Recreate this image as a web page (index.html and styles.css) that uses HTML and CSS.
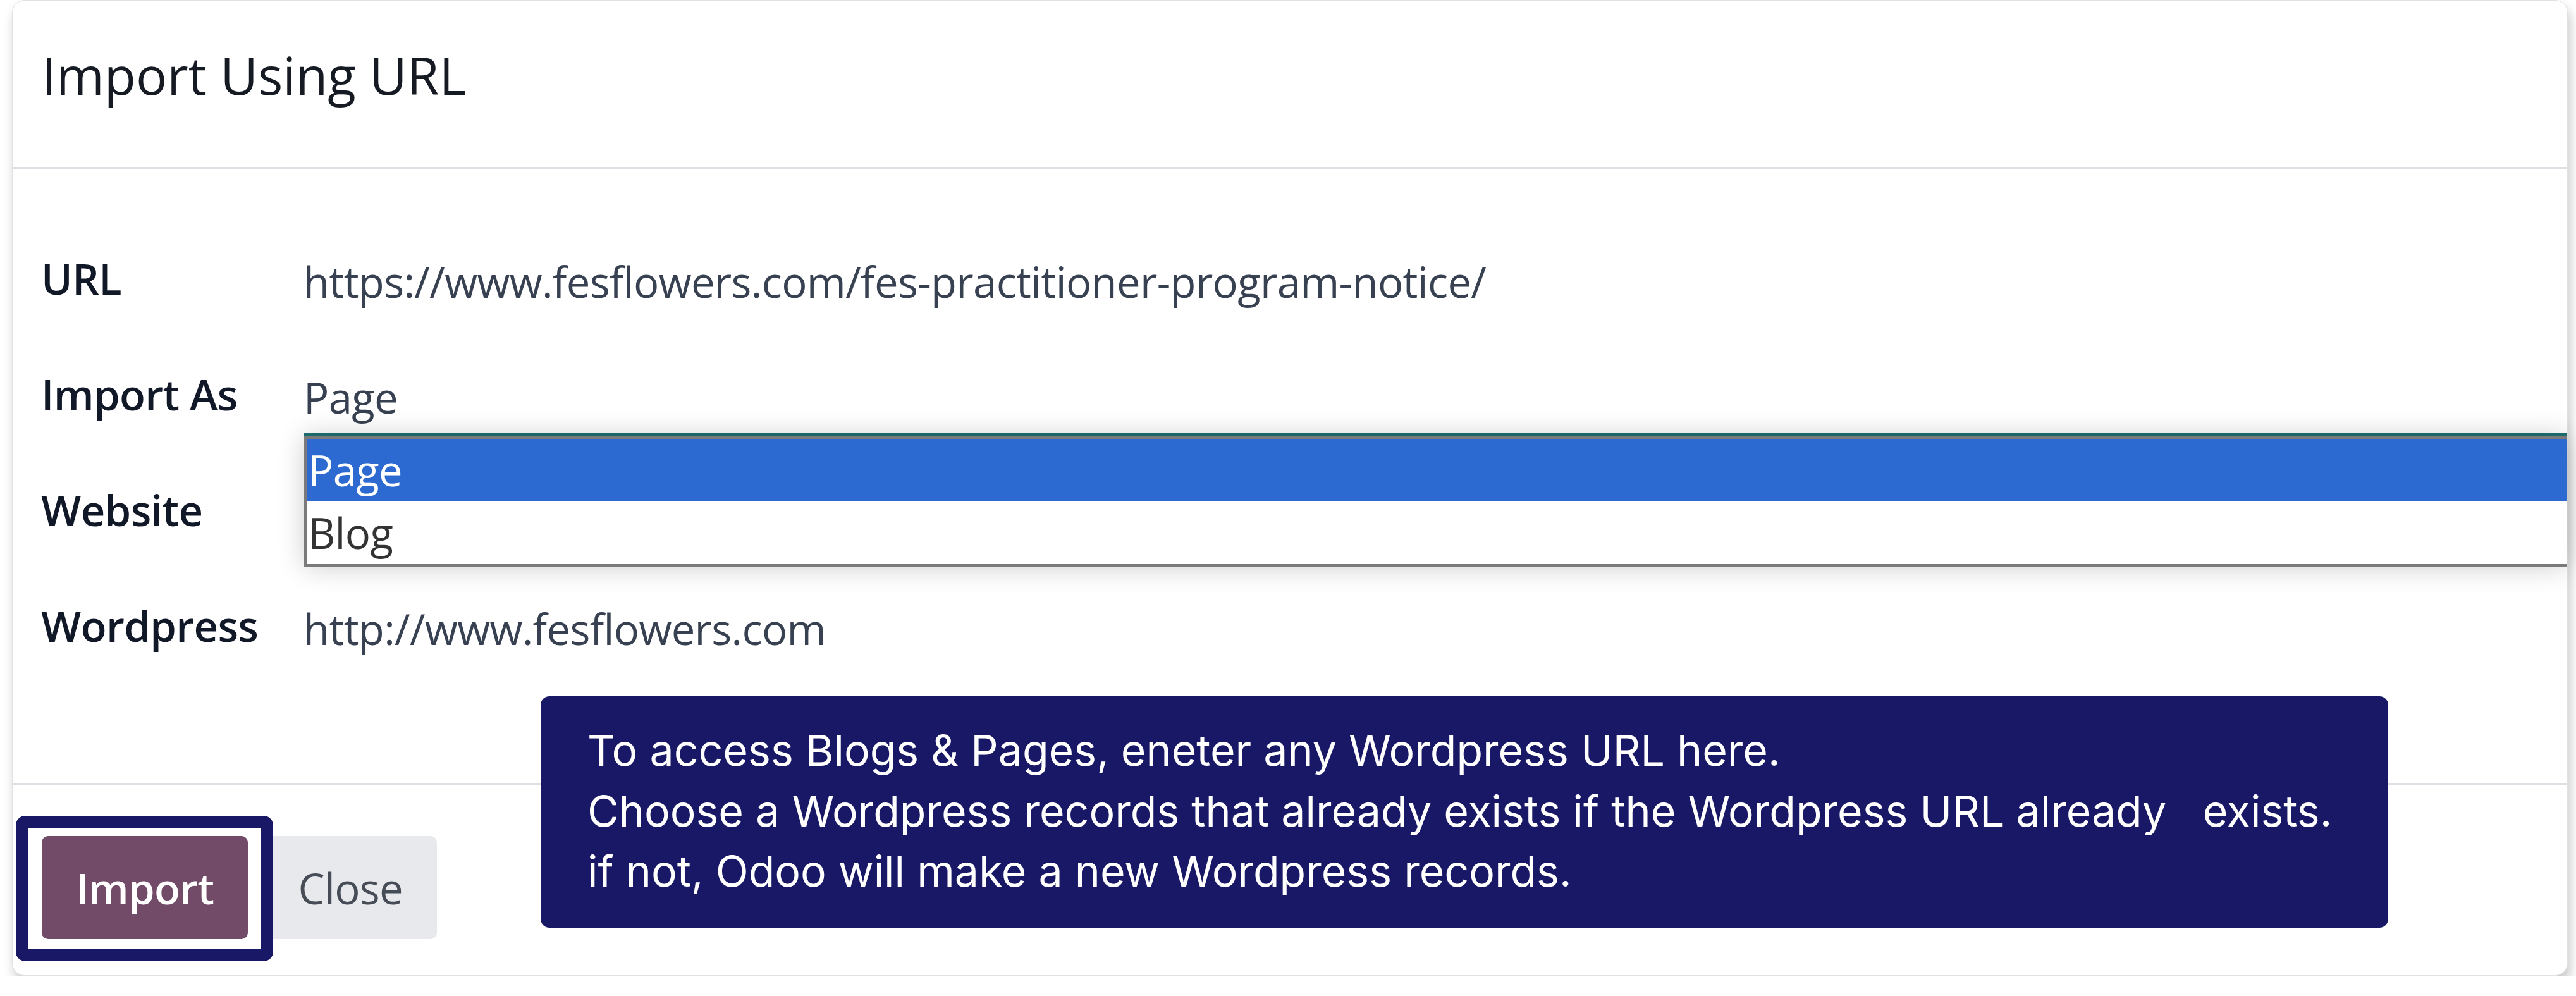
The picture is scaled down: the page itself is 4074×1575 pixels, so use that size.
FILE: index.html
```html
<!DOCTYPE html>
<html lang="en">
<head>
    <meta charset="UTF-8">
    <meta name="viewport" content="width=device-width, initial-scale=1.0">
    <title>Import Using URL</title>
    <link rel="stylesheet" href="styles.css">
</head>
<body>
    <div class="modal">
        <header class="modal-header">
            <h4 class="modal-title">Import Using URL</h4>
        </header>

        <div class="modal-body">
            <div class="field-label">URL</div>
            <div class="field-value">https://www.fesflowers.com/fes-practitioner-program-notice/</div>

            <div class="field-label">Import As</div>
            <div class="field-value select">
                Page
                <!-- native dropdown, opened -->
                <ul class="select-menu">
                    <li class="active">Page</li>
                    <li>Blog</li>
                </ul>
            </div>

            <div class="field-label">Website</div>
            <div class="field-value"></div>

            <div class="field-label">Wordpress</div>
            <div class="field-value">http://www.fesflowers.com</div>
        </div>

        <footer class="modal-footer">
            <span class="focus-ring"></span>
            <button class="btn btn-primary">Import</button>
            <button class="btn btn-secondary">Close</button>
        </footer>

        <div class="hint">
            <p>To access Blogs &amp; Pages, eneter any Wordpress URL here.</p>
            <p>Choose a Wordpress records that already exists if the Wordpress URL already&nbsp;&nbsp; exists.</p>
            <p>if not, Odoo will make a new Wordpress records.</p>
        </div>
    </div>
</body>
</html>
```

FILE: styles.css
```css
* {margin: 0; padding: 0; box-sizing: border-box;}
body {background-color: #FFFFFF; color: #111827; font-family: 'Open Sans', 'Noto Sans', sans-serif;}
li {list-style-type: none;}
button {font-family: inherit; border: none; cursor: pointer;}

.modal {width: 4042px; margin-left: 19px; background-color: #FFFFFF; border: 1px solid #e2e2e2; border-radius: 20px; position: relative; box-shadow: 4px 12px 18px rgba(0, 0, 0, 0.22);}

.modal-header {height: 267px; padding: 61px 0 0 46px; border-bottom: 4px solid #dcdfe4;}
.modal-title {font-size: 82px; font-weight: 400; line-height: normal; color: #161a22;}

/* label column - value column */
.modal-body {display: grid; grid-template-columns: 415px 1fr; grid-auto-rows: 183px; padding: 127px 0 111px 45px; font-size: 67px; letter-spacing: -0.01em;}
.modal-body .field-label {font-weight: 600; line-height: 91px; color: #111827;}
.modal-body .field-value {padding-top: 5px; line-height: 91px; color: #374151; align-self: start;}
.modal-body .field-value.select {padding-bottom: 10px; border-bottom: 5px solid #1f7272; position: relative;}

.select-menu {position: absolute; left: 1px; right: 0; top: calc(100% + 5px); z-index: 3; background-color: #FFFFFF; border: 5px solid #7a7a7a; border-right: none; box-shadow: 0 0 40px rgba(0, 0, 0, 0.2);}
.select-menu li {height: 99px; line-height: 99px; padding-left: 1px; color: #333333; font-weight: 400;}
.select-menu li.active {background-color: #2c69d0; color: #FFFFFF;}

.modal-footer {display: flex; gap: 25px; padding: 80px 0 57px 46px; border-top: 4px solid #dcdfe4; position: relative;}
.modal-footer .btn {height: 163px; padding: 0 54px; font-size: 67px; border-radius: 10px; letter-spacing: -0.01em;}
.modal-footer .btn-primary {background-color: #714b67; color: #FFFFFF; font-weight: 600; position: relative; z-index: 2;}
.modal-footer .btn-secondary {background-color: #e7e9ed; color: #474d57; font-weight: 400;}
.modal-footer .focus-ring {position: absolute; left: 5px; top: 48px; width: 407px; height: 230px; z-index: 1; background-color: #FFFFFF; border: 20px solid #181866; border-radius: 15px;}

.hint {position: absolute; left: 835px; top: 1100px; width: 2922px; height: 366px; padding: 38px 0 0 74px; background-color: #181866; border-radius: 14px; color: #FFFFFF; font-family: 'Inter', 'Roboto', sans-serif; font-size: 68px; line-height: 95.5px; z-index: 4;}
```
